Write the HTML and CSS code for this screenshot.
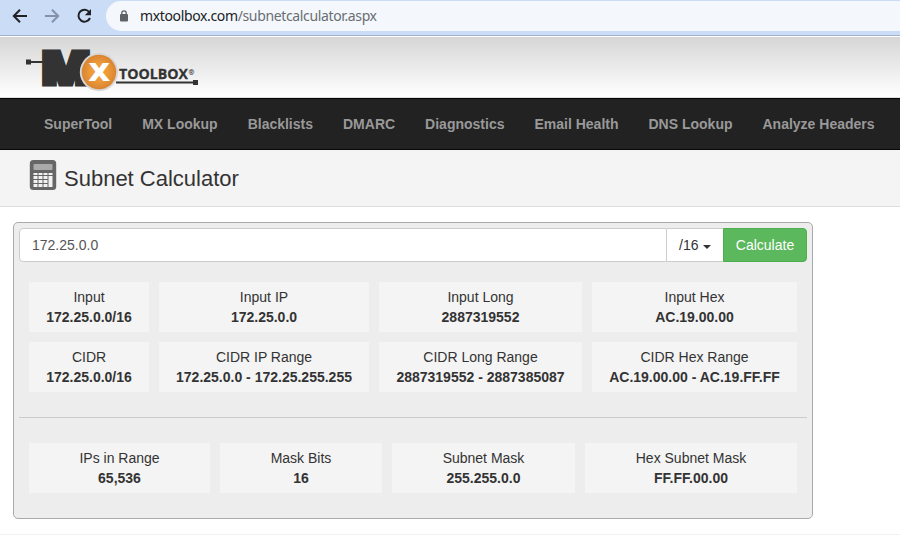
FILE: index.html
```html
<!DOCTYPE html>
<html lang="en">
<head>
<meta charset="utf-8">
<title>Subnet Calculator</title>
<link rel="stylesheet" href="styles.css">
</head>
<body>
<div class="browser-bar">
  <svg class="browser-icons" width="106" height="35" viewBox="0 0 106 35" fill="none" stroke-width="2">
    <path d="M27 16H14M20 9.8L13.8 16l6.2 6.2" stroke="#1f2125"/>
    <path d="M45 16h13M52 9.8l6.2 6.2-6.2 6.2" stroke="#8591a6"/>
    <path d="M89.4 12.2A6 6 0 1 0 90 18" stroke="#1f2125"/>
    <path d="M91 9v6.2h-6.2z" fill="#1f2125"/>
  </svg>
  <div class="address">
    <svg class="lock" width="10" height="12" viewBox="0 0 10 12"><rect x="1" y="4" width="8" height="7.5" rx="1" fill="#5f6368"/><path d="M2.8 4.5V3a2.2 2.2 0 0 1 4.4 0v1.5" fill="none" stroke="#5f6368" stroke-width="1.3"/></svg>
    <span class="url"><span class="host">mxtoolbox.com</span>/subnetcalculator.aspx</span>
  </div>
</div>
<header class="site-header">
  <svg class="logo" width="180" height="50" viewBox="22 45 180 50">
    <defs><radialGradient id="orange"><stop offset="0" stop-color="#f6a43c"/><stop offset=".55" stop-color="#eb9939"/><stop offset="1" stop-color="#d98433"/></radialGradient></defs>
    <path d="M26 59.5h5v5h-5zM31 61h12v2H31z" fill="#333"/>
    <text x="41" y="83.5" class="logo-m" textLength="50" lengthAdjust="spacingAndGlyphs">M</text>
    <circle cx="99" cy="72" r="19.2" fill="#d8d8d8"/>
    <circle cx="99" cy="72" r="17.3" fill="url(#orange)"/>
    <text x="88.500" y="80.8" class="logo-x" textLength="21.5" lengthAdjust="spacingAndGlyphs">X</text>
    <text x="119" y="79" class="logo-word" textLength="69" lengthAdjust="spacingAndGlyphs">TOOLBOX</text>
    <text x="188.500" y="75" class="logo-reg">®</text>
    <path d="M116 81.5h77v2h-77zM193 80h5v5h-5z" fill="#333"/>
  </svg>
</header>
<nav class="main-nav">
  <a>SuperTool</a><a>MX Lookup</a><a>Blacklists</a><a>DMARC</a><a>Diagnostics</a><a>Email Health</a><a>DNS Lookup</a><a>Analyze Headers</a>
</nav>
<div class="page-title">
  <svg class="calc" width="28" height="31" viewBox="0 0 28 31">
    <rect x=".8" y="0" width="26.4" height="30" rx="3.5" fill="#666"/>
    <rect x="4.5" y="4" width="19" height="6" rx="1" fill="#aaa"/>
    <path d="M4.500 13h4v2h-4zM9.500 13h4v2h-4zM14.500 13h4v2h-4zM19.500 13h4v2h-4zM4.500 16h4v3h-4zM9.500 16h4v3h-4zM14.500 16h4v3h-4zM4.500 20h4v3h-4zM9.500 20h4v3h-4zM14.500 20h4v3h-4zM4.500 24h4v3h-4zM9.500 24h4v3h-4zM14.500 24h4v3h-4zM19.500 16h4v11h-4z" fill="#f2f2f2"/>
  </svg>
  <h1>Subnet Calculator</h1>
</div>
<main class="panel">
  <form class="query">
    <div class="ip">172.25.0.0</div>
    <div class="prefix">/16<span class="caret"></span></div>
    <div class="calculate">Calculate</div>
  </form>
  <section class="results ranges">
    <div>Input<b>172.25.0.0/16</b></div>
    <div>Input IP<b>172.25.0.0</b></div>
    <div>Input Long<b>2887319552</b></div>
    <div>Input Hex<b>AC.19.00.00</b></div>
    <div>CIDR<b>172.25.0.0/16</b></div>
    <div>CIDR IP Range<b>172.25.0.0 - 172.25.255.255</b></div>
    <div>CIDR Long Range<b>2887319552 - 2887385087</b></div>
    <div>CIDR Hex Range<b>AC.19.00.00 - AC.19.FF.FF</b></div>
  </section>
  <hr>
  <section class="results masks">
    <div>IPs in Range<b>65,536</b></div>
    <div>Mask Bits<b>16</b></div>
    <div>Subnet Mask<b>255.255.0.0</b></div>
    <div>Hex Subnet Mask<b>FF.FF.00.00</b></div>
  </section>
</main>
<div class="footer-line"></div>
</body>
</html>
```
FILE: styles.css
```css
* { box-sizing: border-box; }
body {
  margin: 0;
  height: 541px;
  overflow: hidden;
  background: #fff;
  color: #333;
  font: 14px/20px "Liberation Sans", Arial, sans-serif;
}
.browser-bar {
  display: flex;
  height: 36px;
  background: #cbdcf7;
  border-bottom: 1px solid #a3b3cb;
}
.browser-icons { flex: none; }
.address {
  display: flex;
  align-items: center;
  flex: 1;
  height: 30px;
  margin-top: 1px;
  padding-left: 13px;
  border-radius: 15px 0 0 15px;
  background: #f4f8fd;
}
.lock { margin-right: 11px; }
.url {
  color: #6a6d71;
  font: 14px/20px "Noto Sans", sans-serif;
  letter-spacing: -.36px;
  white-space: nowrap;
}
.host { color: #202124; }
.site-header {
  height: 62px;
  padding: 8px 22px 0;
  border-top: 1px solid #fff;
  border-bottom: 1px solid #e0e0e0;
  background: linear-gradient(#d6d6d6, #fff);
}
.logo { display: block; overflow: visible; }
.logo-m { font: 800 44px "Open Sans", sans-serif; fill: #333; stroke: #333; stroke-width: 5px; }
.logo-x { font: 800 25px "Open Sans", sans-serif; fill: #fff; }
.logo-word { font: bold 15px "Open Sans", sans-serif; fill: #333; stroke: #333; stroke-width: .3px; }
.logo-reg { font: bold 7px "Open Sans", sans-serif; fill: #333; }
.main-nav {
  display: flex;
  align-items: center;
  gap: 30px;
  height: 52px;
  padding-left: 44px;
  border: solid #080808;
  border-width: 1px 0;
  background: #222;
  color: #999;
  font-weight: bold;
  white-space: nowrap;
}
.page-title {
  display: flex;
  height: 57px;
  padding: 10px 0 0 29px;
  border-bottom: 1px solid #ddd;
  background: #f4f4f4;
}
.page-title h1 {
  margin: 7px 0 0 7px;
  font-size: 22px;
  line-height: 24px;
  font-weight: normal;
}
.panel {
  width: 800px;
  height: 297px;
  margin: 15px 0 0 13px;
  padding: 5px;
  border: 1px solid #aaa;
  border-radius: 5px;
  background: #ededed;
}
.query {
  display: flex;
  height: 34px;
  line-height: 32px;
}
.ip {
  flex: 1;
  padding-left: 12px;
  border: 1px solid #ccc;
  border-radius: 4px 0 0 4px;
  background: #fff;
  color: #555;
}
.prefix {
  display: flex;
  align-items: center;
  width: 56px;
  padding-left: 12px;
  border: 1px solid #ccc;
  border-left: 0;
  border-right: 0;
  background: #fff;
}
.caret {
  margin: 3px 0 0 4.5px;
  border: 4px solid transparent;
  border-top-color: #333;
  border-bottom: 0;
}
.calculate {
  width: 84px;
  border: 1px solid #4cae4c;
  border-radius: 0 4px 4px 0;
  background: #5cb85c;
  color: #fff;
  text-align: center;
}
.results {
  display: grid;
  gap: 10px;
  margin: 20px 10px 0;
  text-align: center;
}
.results div {
  height: 50px;
  padding-top: 5px;
  background: #f4f4f4;
  white-space: nowrap;
}
.results b { display: block; }
.ranges { grid-template-columns: 120px 210px 203px 205px; }
.masks { grid-template-columns: 181px 162px 183px 212px; margin-top: 25px; }
hr {
  height: 1px;
  margin: 25px 0 0;
  border: 0;
  background: #ccc;
}
.footer-line {
  height: 1px;
  margin-top: 15px;
  background: #f1f1f1;
}
```
